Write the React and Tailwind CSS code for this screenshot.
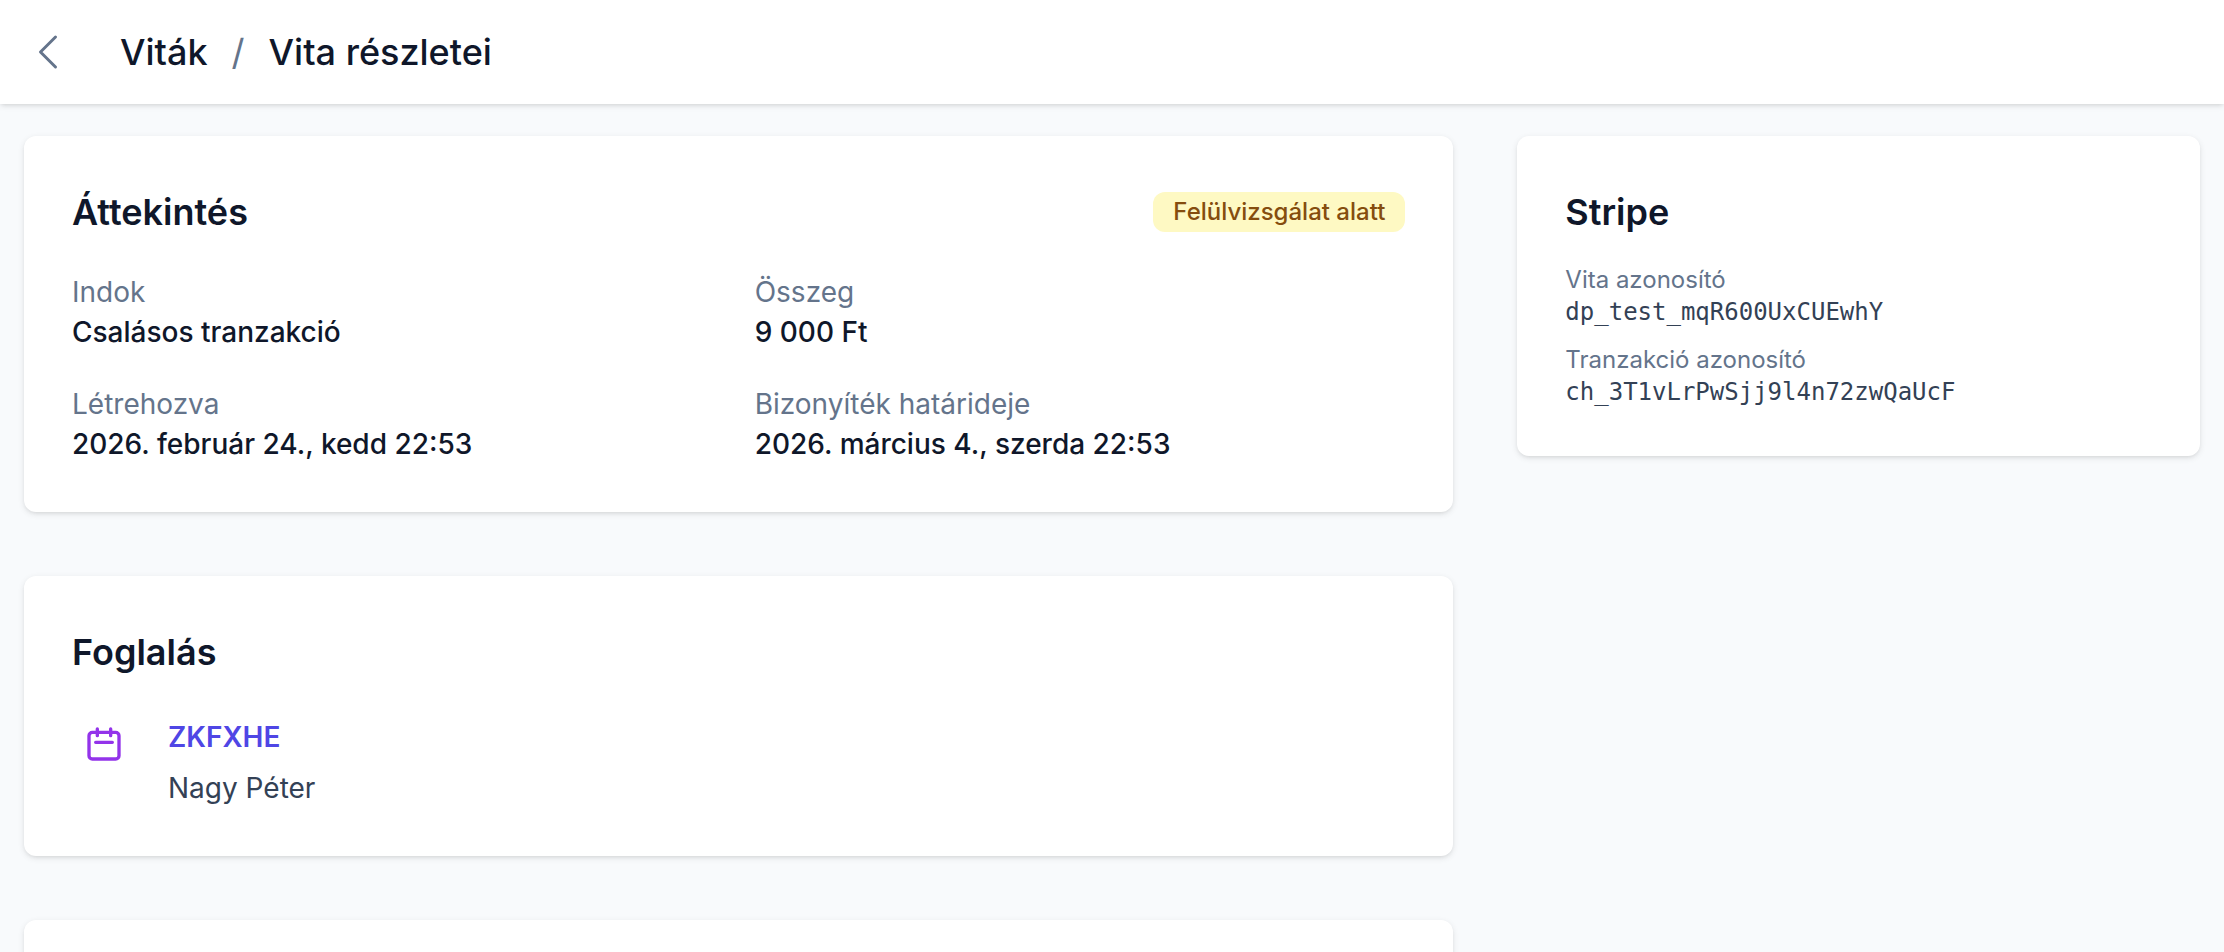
import React from "react";
import clsx from "clsx";

const details = [
	{ label: "Indok", value: "Csalásos tranzakció" },
	{ label: "Összeg", value: "9 000 Ft" },
	{ label: "Létrehozva", value: "2026. február 24., kedd 22:53" },
	{ label: "Bizonyíték határideje", value: "2026. március 4., szerda 22:53" },
];

const stripeIds = [
	{ label: "Vita azonosító", value: "dp_test_mqR600UxCUEwhY" },
	{ label: "Tranzakció azonosító", value: "ch_3T1vLrPwSjj9l4n72zwQaUcF" },
];

const elevation =
	"bg-white shadow-[0_2px_6px_0_rgb(0_0_0/0.1),0_2px_4px_-2px_rgb(0_0_0/0.1)]";

function ChevronLeftIcon() {
	return (
		<svg
			viewBox="0 0 24 24"
			fill="none"
			stroke="currentColor"
			strokeWidth="1.5"
			strokeLinecap="round"
			strokeLinejoin="round"
			className="size-12"
			aria-hidden="true"
		>
			<path d="M15.75 19.5 8.25 12l7.5-7.5" />
		</svg>
	);
}

function CalendarIcon() {
	return (
		<svg
			viewBox="0 0 24 24"
			fill="none"
			stroke="currentColor"
			strokeWidth="2"
			strokeLinecap="round"
			strokeLinejoin="round"
			className="size-10"
			aria-hidden="true"
		>
			<path d="M8 7V3m8 4V3m-9 8h10M5 21h14a2 2 0 002-2V7a2 2 0 00-2-2H5a2 2 0 00-2 2v12a2 2 0 002 2z" />
		</svg>
	);
}

function Card({ className, children }) {
	return (
		<section className={clsx("rounded-xl p-12", elevation, className)}>
			{children}
		</section>
	);
}

function CardTitle({ children }) {
	return (
		<h2 className="text-[36px] leading-[56px] font-semibold">{children}</h2>
	);
}

function Header() {
	return (
		<header className={clsx("flex h-26 shrink-0 items-center px-6", elevation)}>
			<button type="button" aria-label="Vissza" className="text-[#64748b]">
				<ChevronLeftIcon />
			</button>
			<nav className="ml-12 flex items-center gap-6 text-[36px] leading-[56px] font-medium">
				<a href="#vitak">Viták</a>
				<span className="font-normal text-[#64748b]">/</span>
				<h1>Vita részletei</h1>
			</nav>
		</header>
	);
}

export default function App() {
	return (
		<div className="flex h-screen flex-col overflow-hidden bg-[#f8fafc] font-['Inter',sans-serif] text-[#0f172a] antialiased">
			<Header />
			<main className="grid grid-cols-3 items-start gap-16 px-6 pt-8">
				<div className="col-span-2 flex flex-col gap-16">
					<Card>
						<div className="flex items-center justify-between">
							<CardTitle>Áttekintés</CardTitle>
							<span className="rounded-xl bg-[#fef9c3] px-5 py-1 text-[24px] leading-8 font-medium text-[#854d0e]">
								Felülvizsgálat alatt
							</span>
						</div>
						<dl className="mt-8 grid grid-cols-2 gap-8 text-[28px] leading-10">
							{details.map(({ label, value }) => (
								<div key={label}>
									<dt className="text-[#64748b]">{label}</dt>
									<dd className="font-medium">{value}</dd>
								</div>
							))}
						</dl>
					</Card>

					<Card>
						<CardTitle>Foglalás</CardTitle>
						<div className="mt-8 flex items-start gap-8">
							<div className="flex size-16 items-center justify-center text-[#9333ea]">
								<CalendarIcon />
							</div>
							<div className="text-[28px]">
								<a
									href="#foglalas"
									className="block leading-[50px] font-semibold text-[#4f46e5]"
								>
									ZKFXHE
								</a>
								<p className="mt-1.5 leading-10 text-[#334155]">Nagy Péter</p>
							</div>
						</div>
					</Card>

					<Card className="min-h-80" />
				</div>

				<Card>
					<CardTitle>Stripe</CardTitle>
					<dl className="mt-6 flex flex-col gap-4 text-[24px] leading-8">
						{stripeIds.map(({ label, value }) => (
							<div key={label}>
								<dt className="text-[#64748b]">{label}</dt>
								<dd className="font-['DejaVu_Sans_Mono',monospace] text-[#334155]">
									{value}
								</dd>
							</div>
						))}
					</dl>
				</Card>
			</main>
		</div>
	);
}
